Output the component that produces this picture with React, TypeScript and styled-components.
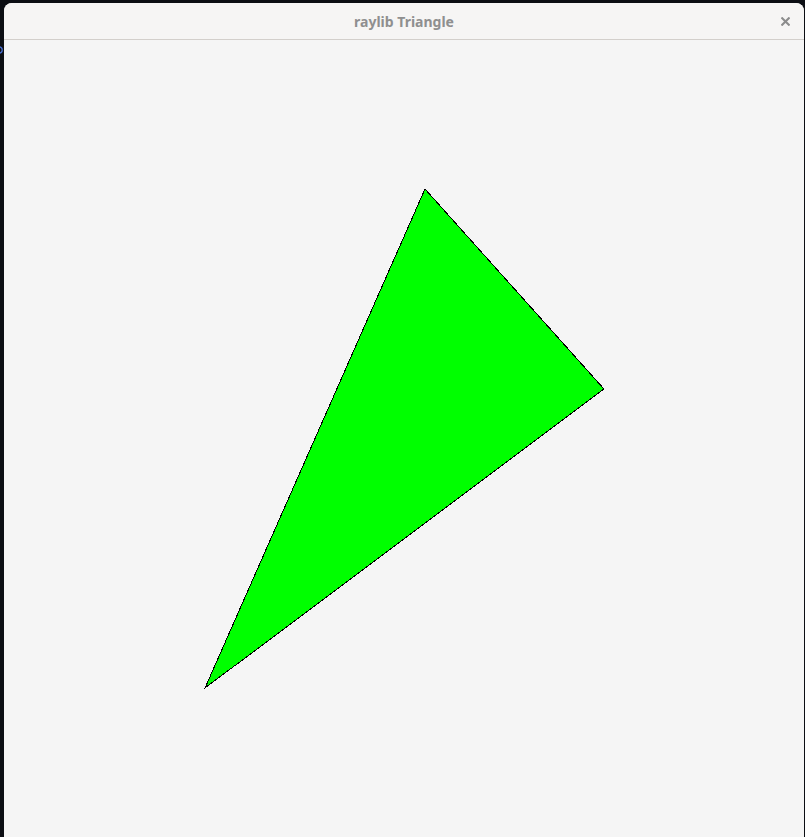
import React from "react";
import styled, { createGlobalStyle } from "styled-components";

const Global = createGlobalStyle`
  html, body { margin: 0; padding: 0; background: #0c0e13; overflow: hidden; }
  #root { width: 805px; height: 837px; }
`;

const Desktop = styled.div`
  position: relative;
  width: 805px;
  height: 837px;
  padding: 3px 1px 0 4px;
  box-sizing: border-box;
  display: flex;
`;

const Window = styled.div`
  flex: 1;
  display: flex;
  flex-direction: column;
  border-radius: 8px 8px 0 0;
  overflow: hidden;
  background: #f4f4f4;
`;

const TitleBar = styled.div`
  height: 36px;
  flex: 0 0 36px;
  background: #f6f5f4;
  border-bottom: 1px solid #d3cfcb;
  display: flex;
  align-items: center;
  justify-content: center;
  position: relative;
`;

const Title = styled.span`
  font-family: "Noto Sans", "Open Sans", sans-serif;
  font-weight: 700;
  font-size: 14px;
  color: #8f8f8f;
  letter-spacing: 0;
`;

const CloseButton = styled.div`
  position: absolute;
  right: 14px;
  top: 14px;
  width: 9px;
  height: 9px;
  display: flex;
`;

const Canvas = styled.div`
  flex: 1;
  background: #f5f5f5;
`;

const EdgeMark = styled.svg`
  position: absolute;
  left: -4px;
  top: 45px;
`;

export default function App() {
  return (
    <>
      <Global />
      <Desktop>
        <EdgeMark width="8" height="10" viewBox="0 0 8 10">
          <circle cx="3" cy="5" r="3.2" fill="none" stroke="#4a6fd0" strokeWidth="1.3" />
        </EdgeMark>
        <Window>
          <TitleBar>
            <Title>raylib Triangle</Title>
            <CloseButton>
              <svg width="9" height="9" viewBox="0 0 9 9">
                <path d="M1.2 1.2 L7.8 7.8 M7.8 1.2 L1.2 7.8" stroke="#8c8c8c" strokeWidth="2.1" strokeLinecap="square" />
              </svg>
            </CloseButton>
          </TitleBar>
          <Canvas>
            <svg width="800" height="797" viewBox="0 0 800 797" shapeRendering="crispEdges">
              <polygon points="421,149 600,349 201,648" fill="#00ff00" stroke="#000" strokeWidth="1" />
            </svg>
          </Canvas>
        </Window>
      </Desktop>
    </>
  );
}
